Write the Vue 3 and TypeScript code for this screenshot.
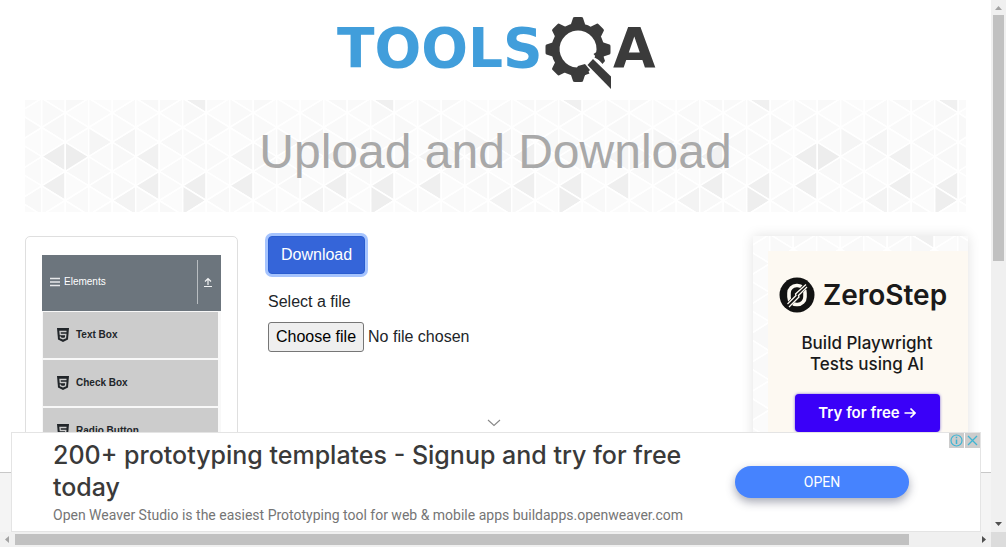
<script setup lang="ts">
interface Facet {
  points: string
  fill: string
}

const menuItems: string[] = ['Text Box', 'Check Box', 'Radio Button']

// Triangular mesh: columns are COLUMN wide, each triangle is SIDE tall.
const COLUMN = 23.5
const SIDE = 29.2

function shadeOf(col: number, row: number, leftward: boolean): string {
  const c = ((col % 8) + 8) % 8
  if (leftward) {
    if (row === 1 && (c === 0 || c === 4 || c === 6)) return '#efefef'
    if (row === 0 && col % 32 === 0) return '#eeeeee'
    if (row === 0 && c === 4) return '#f1f1f1'
    if (row === 0 && c === 0) return '#f4f4f4'
    if (row === 1 && c === 3) return '#f3f3f3'
    if (row === -1 && c === 3) return '#f5f5f5'
    if (row === -2 && c === 6) return '#f0f0f0'
  } else {
    if (row === 1 && c === 6) return '#eeeeee'
    if (row === 0 && col % 32 === 1) return '#ededed'
    if (row === 0 && c === 1) return '#f6f6f6'
    if (row === -1 && c === 2) return '#f5f5f5'
  }
  const tones = ['#fafafa', '#fbfbfb', '#f8f8f8', '#fbfbfb', '#f9f9f9']
  return tones[(c * 3 + (row + 4) * 2 + (leftward ? 1 : 0)) % tones.length]
}

// Odd columns sit half a triangle higher than even ones.
function vertexY(col: number, row: number): number {
  return 56.7 + row * SIDE + (Math.abs(col) % 2 === 1 ? SIDE / 2 : 0)
}

const facets: Facet[] = []
for (let col = -1; col < 100; col++) {
  const x1 = 16.7 + col * COLUMN
  const x2 = x1 + COLUMN
  for (let row = -3; row < 14; row++) {
    const apexLeft = vertexY(col, row)
    facets.push({
      points: `${x1},${apexLeft} ${x2},${apexLeft - SIDE / 2} ${x2},${apexLeft + SIDE / 2}`,
      fill: shadeOf(col, row, true),
    })
    const apexRight = vertexY(col + 1, row)
    facets.push({
      points: `${x2},${apexRight} ${x1},${apexRight - SIDE / 2} ${x1},${apexRight + SIDE / 2}`,
      fill: shadeOf(col, row, false),
    })
  }
}

const gearTeeth: number[] = [0, 45, 90, 180, 225, 270, 315]
</script>

<template>
  <div class="window">
    <div class="viewport">
      <div class="page">
        <header class="top">
          <a href="#" aria-label="Tools QA">
            <svg class="logo" viewBox="0 0 335 85" width="335" height="85">
              <text class="word blue" x="7" y="57">TOOLS</text>
              <g fill="#3b3b3b">
                <path
                  v-for="angle in gearTeeth"
                  :key="angle"
                  d="M241 14 L243 8 Q243 7 245 7 H251 Q253 7 253 8 L255 14 V18 H241 Z"
                  :transform="`rotate(${angle} 248 39.5)`"
                />
                <path d="M271.5 51.5 A26.500 26.500 0 1 0 259.500 63.400 L255.500 56 A18.500 18.500 0 1 1 264.500 47.500 Z" />
                <path d="M248 56 L255 54 L260 60 L254 66 H242 Z" />
                <path d="M263.500 44 L272.500 54 L275 51 L271 39 Z" />
                <path d="M263 49 L281 66.500 V79 L257.500 55 Z" />
              </g>
              <text class="word dark" x="283" y="57">A</text>
            </svg>
          </a>
        </header>

        <section class="banner">
          <svg class="mesh" width="100%" height="100%" aria-hidden="true">
            <g stroke="#ffffff" stroke-width="1.500" stroke-linejoin="round">
              <polygon v-for="(f, i) in facets" :key="i" :points="f.points" :fill="f.fill" />
            </g>
          </svg>
          <h1>Upload and Download</h1>
        </section>

        <div class="columns">
          <nav class="sidebar">
            <button class="group" type="button">
              <svg width="10" height="10" viewBox="0 0 10 10" aria-hidden="true">
                <path d="M0 1.500H10M0 5H10M0 8.500H10" stroke="#e6e8ea" stroke-width="1.700" />
              </svg>
              <span>Elements</span>
              <span class="toggle">
                <svg width="8" height="10" viewBox="0 0 8 10" aria-hidden="true">
                  <path d="M4 8V2M1 4.500L4 1.500L7 4.500M0 9.500H8" fill="none" stroke="#f1f2f3" stroke-width="1.200" />
                </svg>
              </span>
            </button>
            <ul class="menu">
              <li v-for="item in menuItems" :key="item">
                <a href="#">
                  <svg width="12" height="14" viewBox="0 0 12 14" aria-hidden="true">
                    <path d="M0 0H12L11 11.500L6 14L1 11.500Z" fill="#212529" />
                    <path d="M9.500 3.500H3L3.300 6.500H8.800L8.500 9.800L6 10.700L3.500 9.800L3.300 8.500" fill="none" stroke="#cccccc" stroke-width="1.300" />
                  </svg>
                  <span>{{ item }}</span>
                </a>
              </li>
            </ul>
          </nav>

          <main class="content">
            <button class="download" type="button">Download</button>
            <form>
              <label class="caption" for="upload">Select a file</label>
              <div class="picker">
                <input id="upload" type="file" />
                <label class="choose" for="upload">Choose file</label>
                <span>No file chosen</span>
              </div>
            </form>
          </main>

          <aside class="promo">
            <svg class="mesh" width="100%" height="100%" aria-hidden="true">
              <g stroke="#ffffff" stroke-width="1.500" stroke-linejoin="round">
                <polygon v-for="(f, i) in facets" :key="i" :points="f.points" :fill="f.fill" />
              </g>
            </svg>
            <div class="promo-card">
              <div class="brand">
                <svg width="36" height="36" viewBox="0 0 36 36" aria-hidden="true">
                  <circle cx="18" cy="18" r="17.500" fill="#121212" />
                  <rect x="10" y="8.500" width="16" height="19" rx="7.500" fill="none" stroke="#fdf9f2" stroke-width="3.600" />
                  <path d="M8 30L28 7" stroke="#121212" stroke-width="5" />
                  <path d="M8.500 27L17 18.500L16.500 17L27 7.500M10 30L20 20L19.500 18.500L28 10" fill="none" stroke="#fdf9f2" stroke-width="1.300" />
                </svg>
                <strong>ZeroStep</strong>
              </div>
              <p>Build Playwright<br />Tests using AI</p>
              <button class="try" type="button">
                <span>Try for free</span>
                <svg width="12" height="12" viewBox="0 0 12 12" aria-hidden="true">
                  <path d="M0.500 6H11M6.500 1.500L11 6L6.500 10.500" fill="none" stroke="#ffffff" stroke-width="1.700" />
                </svg>
              </button>
            </div>
          </aside>
        </div>
      </div>
      <footer class="footer"></footer>

      <section class="anchor-ad">
        <button class="collapse" type="button" aria-label="Collapse">
          <svg width="14" height="8" viewBox="0 0 14 8" aria-hidden="true">
            <path d="M1 1L7 6.500L13 1" fill="none" stroke="#888888" stroke-width="1.100" />
          </svg>
        </button>
        <div class="ad-copy">
          <h2>200+ prototyping templates - Signup and try for free today</h2>
          <p>Open Weaver Studio is the easiest Prototyping tool for web &amp; mobile apps buildapps.openweaver.com</p>
        </div>
        <button class="open" type="button">OPEN</button>
        <div class="ad-marks">
          <button type="button" aria-label="Ad information">
            <svg width="15" height="15" viewBox="0 0 15 15" aria-hidden="true">
              <circle cx="7.500" cy="7.500" r="5.500" fill="none" stroke="#3fb5d3" stroke-width="1.200" />
              <path d="M7.500 6.500V11M7.500 3.800V5.200" stroke="#3fb5d3" stroke-width="1.500" />
            </svg>
          </button>
          <button type="button" aria-label="Close ad">
            <svg width="15" height="15" viewBox="0 0 15 15" aria-hidden="true">
              <path d="M3 3L12 12M12 3L3 12" stroke="#3fb5d3" stroke-width="1.300" />
            </svg>
          </button>
        </div>
      </section>
    </div>

    <div class="bar vertical" aria-hidden="true">
      <svg width="15" height="15" viewBox="0 0 15 15"><path d="M4 10L7.500 6L11 10Z" fill="#a3a3a3" /></svg>
      <div class="track"><div class="thumb"></div></div>
      <svg width="15" height="15" viewBox="0 0 15 15"><path d="M4 5L7.500 9L11 5Z" fill="#505050" /></svg>
    </div>
    <div class="bar horizontal" aria-hidden="true">
      <svg width="15" height="15" viewBox="0 0 15 15"><path d="M9 4L5 7.500L9 11Z" fill="#a3a3a3" /></svg>
      <div class="track"><div class="thumb"></div></div>
      <svg width="15" height="15" viewBox="0 0 15 15"><path d="M6 4L10 7.500L6 11Z" fill="#505050" /></svg>
    </div>
    <div class="corner"></div>
  </div>
</template>

<style>
body {
  margin: 0;
  background: #ffffff;
}
</style>

<style scoped>
* {
  box-sizing: border-box;
}

button {
  font: inherit;
  cursor: pointer;
}

.window {
  display: grid;
  grid-template-columns: minmax(0, 1fr) 15px;
  grid-template-rows: minmax(0, 1fr) 15px;
  height: 100vh;
  font-family: "Liberation Sans", Arial, sans-serif;
  font-size: 16px;
  line-height: 24px;
  color: #212529;
}

.viewport {
  position: relative;
  display: flex;
  flex-direction: column;
  overflow: hidden;
}

.page {
  flex: 1;
  min-height: 0;
  overflow: hidden;
  padding: 0 25px;
}

.footer {
  flex: none;
  height: 60px;
  background: #f4f4f4;
  border-top: 1px solid #c8c8c8;
}

.top {
  display: flex;
  justify-content: center;
  padding: 10px 0 5px 4px;
}

.logo {
  display: block;
}

.word {
  font-family: "DejaVu Sans", sans-serif;
  font-weight: 700;
  font-size: 55px;
}

.blue {
  fill: #419edb;
}

.dark {
  fill: #3b3b3b;
}

.banner {
  position: relative;
  height: 112px;
  overflow: hidden;
  background: #fafafa;
}

.mesh {
  position: absolute;
  inset: 0;
  display: block;
  overflow: hidden;
}

h1 {
  position: relative;
  margin: 0;
  padding: 24px 0;
  font-size: 48px;
  line-height: 56px;
  font-weight: 400;
  text-align: center;
  color: #a9a9a9;
}

.columns {
  display: flex;
  align-items: flex-start;
  gap: 30px;
  margin: 24px -2px 0 0;
}

.sidebar {
  flex: none;
  width: 213px;
  height: 600px;
  padding: 18px 16px;
  border: 1px solid #dfdfdf;
  border-radius: 5px;
  font-size: 10px;
}

.group {
  display: flex;
  align-items: center;
  gap: 4px;
  width: 100%;
  height: 56px;
  padding: 0 9px 2px 8px;
  border: 0;
  background: #6c757d;
  color: #ffffff;
}

.toggle {
  display: flex;
  align-items: center;
  height: 44px;
  margin-left: auto;
  padding-left: 6px;
  border-left: 1px solid #b8bdc1;
}

.menu {
  display: grid;
  gap: 2px;
  margin: 0;
  padding: 1px 3px 1px 1px;
  list-style: none;
  background: #f8f8f8;
}

.menu a {
  display: flex;
  align-items: center;
  gap: 7px;
  height: 46px;
  padding: 0 14px;
  background: #cccccc;
  color: #212529;
  font-weight: 700;
  text-decoration: none;
}

.content {
  flex: 1;
  min-width: 0;
}

.download {
  display: block;
  height: 38px;
  padding: 0 12px;
  border: 1px solid #2a5dd0;
  border-radius: 4px;
  background: #3565d9;
  color: #ffffff;
  box-shadow: 0 0 0 3px #a6c4fe;
}

.caption {
  display: block;
  margin: 16px 0 8px;
}

.picker {
  position: relative;
  display: flex;
  align-items: center;
  gap: 4px;
  height: 30px;
}

.picker input {
  position: absolute;
  inset: 0;
  width: 100%;
  opacity: 0;
}

.choose {
  height: 30px;
  padding: 2px 7px;
  border: 1px solid #767676;
  border-radius: 3px;
  background: #efefef;
  color: #000000;
}

.promo {
  position: relative;
  flex: none;
  width: 215px;
  height: 600px;
  padding: 15px 0 0 15px;
  background: #fafafa;
  box-shadow: 0 0 12px rgba(0, 0, 0, 0.12);
}

.promo-card {
  position: relative;
  display: flex;
  flex-direction: column;
  align-items: center;
  height: 100%;
  padding: 24px 2px 0 0;
  background: #fdf9f2;
  font-family: Inter, sans-serif;
  color: #1a1a1a;
}

.brand {
  display: flex;
  align-items: center;
  gap: 8px;
  padding-right: 8px;
  height: 40px;
}

.brand strong {
  font-size: 28px;
  line-height: 40px;
  font-weight: 600;
}

.promo p {
  margin: 18px 0 19px;
  font-size: 17px;
  line-height: 21px;
  font-weight: 500;
  text-align: center;
}

.try {
  display: flex;
  align-items: center;
  justify-content: center;
  gap: 4px;
  width: 145px;
  height: 38px;
  padding: 0;
  border: 0;
  border-radius: 4px;
  background: #3a00f8;
  box-shadow: 0 0 3px #7a66d8;
  color: #ffffff;
  font-size: 15px;
  font-weight: 600;
}

.anchor-ad {
  position: absolute;
  left: 11px;
  right: 10px;
  bottom: 0;
  display: flex;
  align-items: center;
  gap: 34px;
  height: 100px;
  padding: 0 71px 0 41px;
  border: 1px solid #e4e4e4;
  background: #ffffff;
}

.collapse {
  position: absolute;
  top: -17px;
  left: 475px;
  height: 14px;
  padding: 0;
  border: 0;
  background: none;
  line-height: 0;
}

.ad-copy {
  flex: 1;
  min-width: 0;
  padding-top: 2px;
}

h2 {
  margin: 0;
  font-family: Inter, sans-serif;
  font-size: 25px;
  line-height: 32px;
  font-weight: 500;
  color: #3a3a3a;
}

.ad-copy p {
  margin: 0;
  font-family: Roboto, sans-serif;
  line-height: 24px;
  font-size: 14px;
  color: #757575;
  white-space: nowrap;
}

.open {
  flex: none;
  width: 174px;
  height: 32px;
  padding: 0;
  border: 0;
  border-radius: 16px;
  background: #4683fe;
  box-shadow: 0 4px 10px rgba(60, 64, 90, 0.45);
  color: #ffffff;
  font-family: Roboto, sans-serif;
  font-size: 14px;
}

.ad-marks {
  position: absolute;
  top: 0;
  right: 0;
  display: flex;
  gap: 1px;
}

.ad-marks button {
  width: 15px;
  height: 15px;
  padding: 0;
  border: 0;
  background: #cccccc;
  line-height: 0;
}

.bar {
  display: flex;
  background: #f0f0f0;
}

.bar svg {
  flex: none;
}

.track {
  flex: 1;
  min-width: 0;
  min-height: 0;
}

.thumb {
  background: #c1c1c1;
}

.vertical {
  flex-direction: column;
}

.vertical .track {
  padding: 0 2px;
}

.vertical .thumb {
  height: 49%;
}

.horizontal .track {
  padding: 2px 0;
}

.horizontal .thumb {
  width: 93%;
  height: 100%;
}

.corner {
  background: #dcdcdc;
}
</style>
